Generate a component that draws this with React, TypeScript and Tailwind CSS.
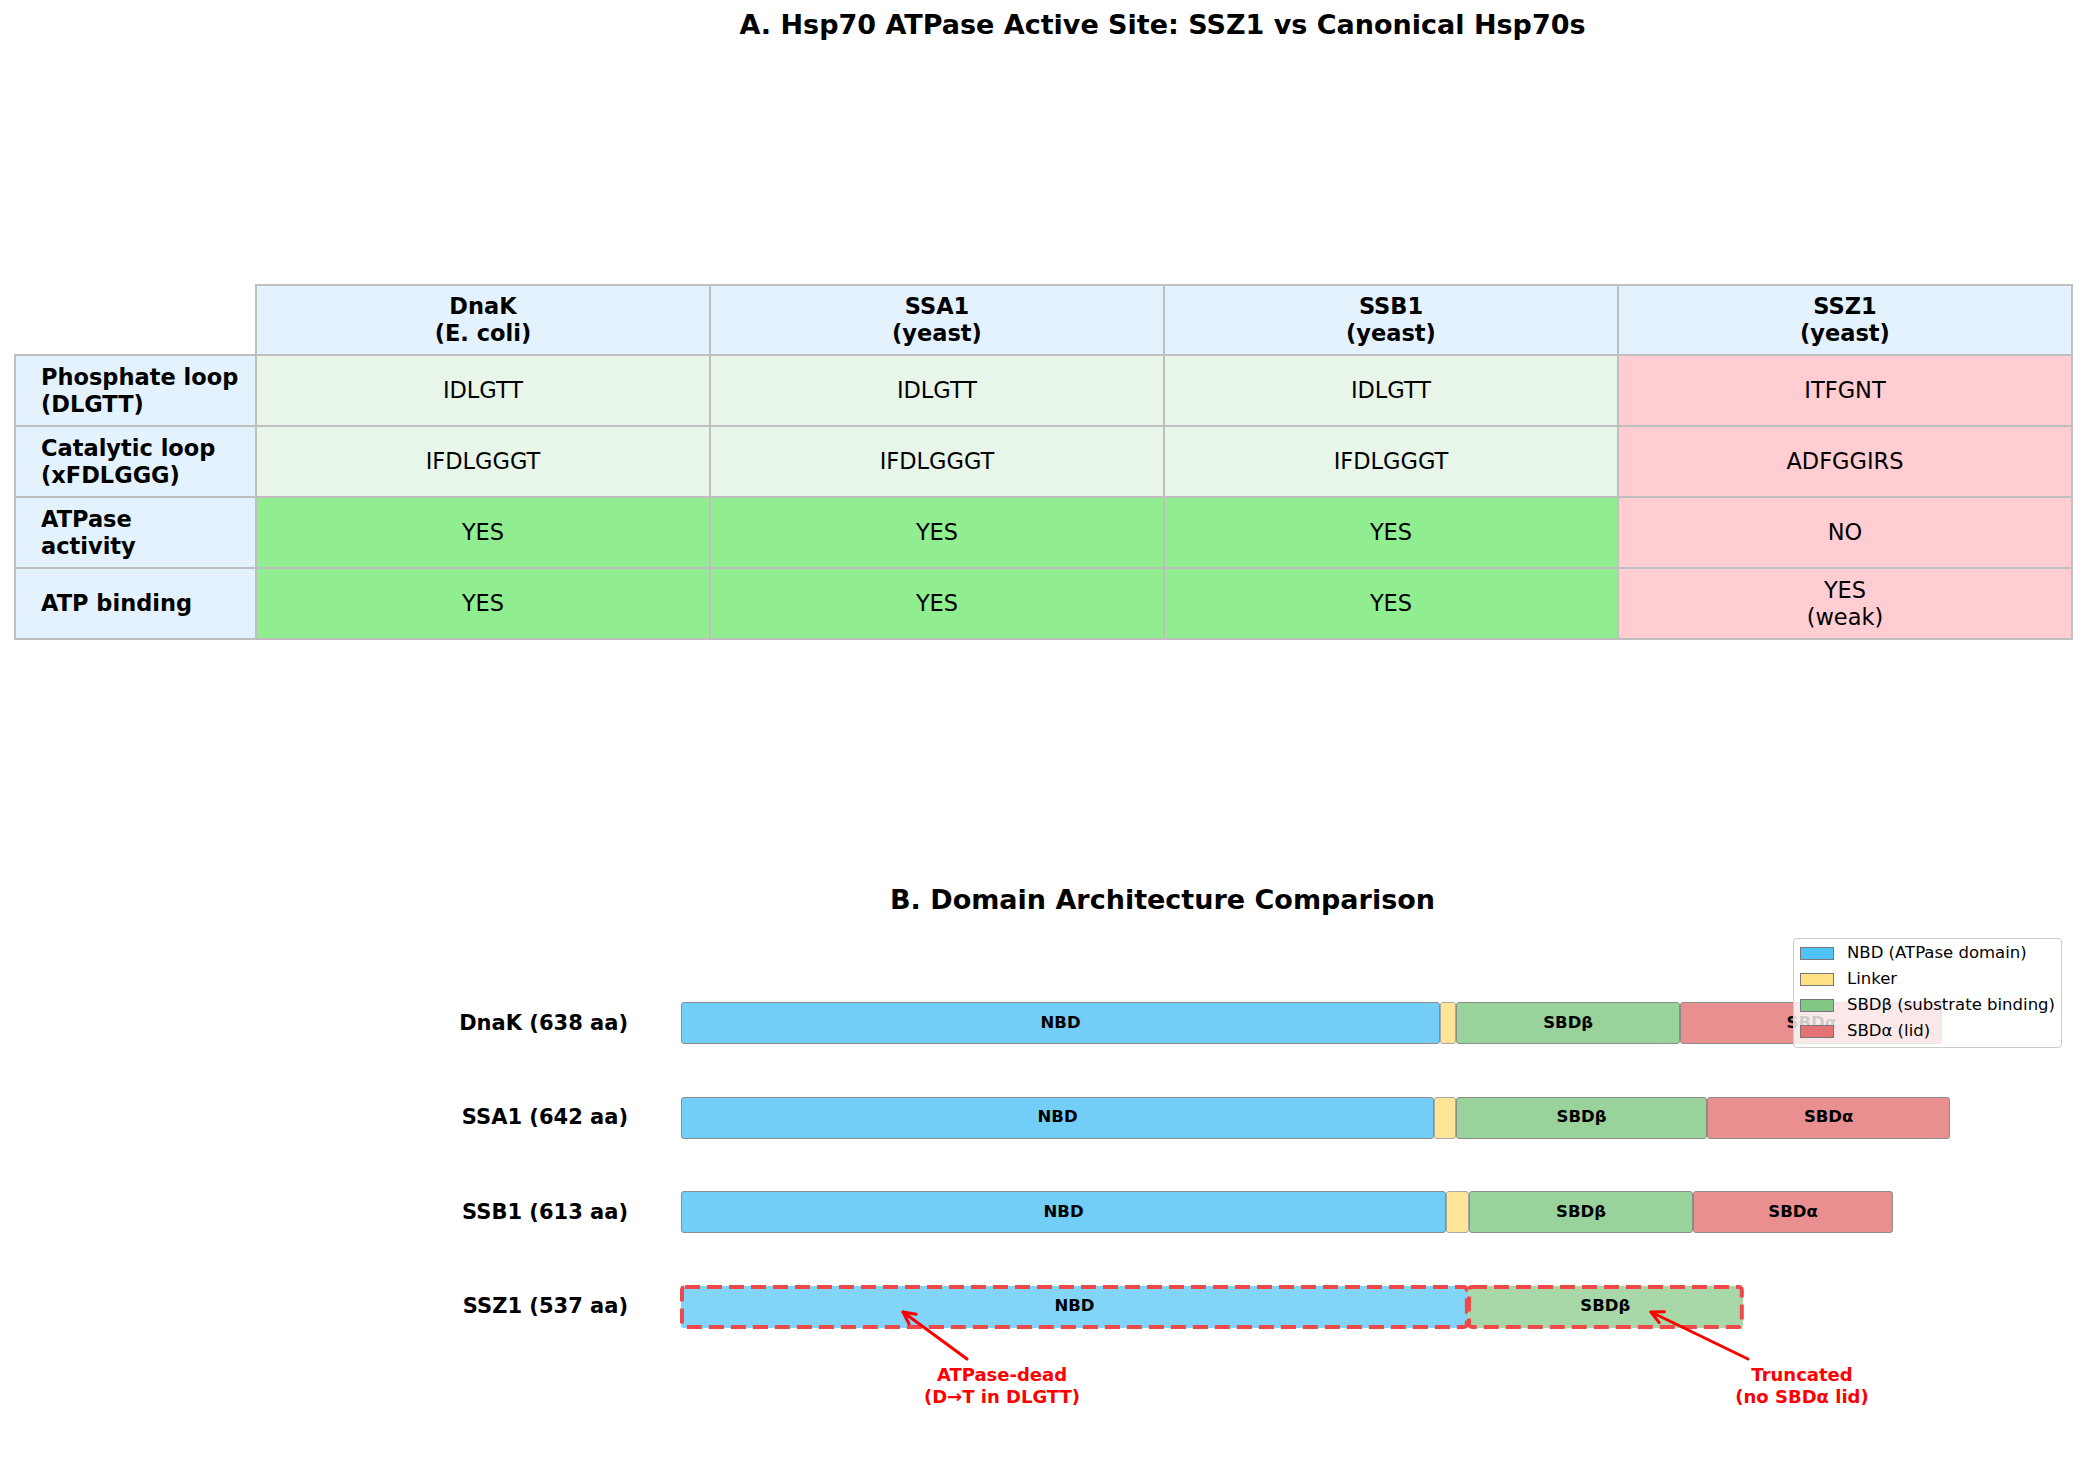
import React from 'react';

type Kind = 'nbd' | 'linker' | 'beta' | 'alpha';

interface Protein {
  name: string;
  bounds: number[];
  kinds: Kind[];
  dead?: boolean;
}

const PX_PER_AA = 1.977;

const proteins: Protein[] = [
  { name: 'DnaK (638 aa)', bounds: [0, 384, 392, 505.5, 638], kinds: ['nbd', 'linker', 'beta', 'alpha'] },
  { name: 'SSA1 (642 aa)', bounds: [0, 381, 392, 519, 642], kinds: ['nbd', 'linker', 'beta', 'alpha'] },
  { name: 'SSB1 (613 aa)', bounds: [0, 387, 398.5, 512, 613], kinds: ['nbd', 'linker', 'beta', 'alpha'] },
  { name: 'SSZ1 (537 aa)', bounds: [0, 398, 537], kinds: ['nbd', 'beta'], dead: true },
];

const segClass: Record<Kind, string> = {
  nbd: 'bg-[#72cef7] border-[1.5px] border-[#8c8c8c]',
  linker: 'bg-[#ffe597] border-[1.5px] border-[#a8a8a8]',
  beta: 'bg-[#9ad29c] border-[1.5px] border-[#8c8c8c]',
  alpha: 'bg-[#ea8f8f] border-[1.5px] border-[#8c8c8c]',
};

const deadClass: Record<Kind, string> = {
  nbd: 'bg-[#82d4f8]',
  linker: 'bg-[#ffe9a8]',
  beta: 'bg-[#a8d8a8]',
  alpha: 'bg-[#eea0a0]',
};

const segLabel: Record<Kind, string> = {
  nbd: 'NBD',
  linker: '',
  beta: 'SBDβ',
  alpha: 'SBDα',
};

const columns = [
  ['DnaK', '(E. coli)'],
  ['SSA1', '(yeast)'],
  ['SSB1', '(yeast)'],
  ['SSZ1', '(yeast)'],
];

const rows: { label: string[]; cells: string[][]; fill: string }[] = [
  { label: ['Phosphate loop', '(DLGTT)'], cells: [['IDLGTT'], ['IDLGTT'], ['IDLGTT'], ['ITFGNT']], fill: 'bg-[#e8f5e9]' },
  { label: ['Catalytic loop', '(xFDLGGG)'], cells: [['IFDLGGGT'], ['IFDLGGGT'], ['IFDLGGGT'], ['ADFGGIRS']], fill: 'bg-[#e8f5e9]' },
  { label: ['ATPase', 'activity'], cells: [['YES'], ['YES'], ['YES'], ['NO']], fill: 'bg-[#90ee90]' },
  { label: ['ATP binding'], cells: [['YES'], ['YES'], ['YES'], ['YES', '(weak)']], fill: 'bg-[#90ee90]' },
];

const legend: { kind: string; text: string }[] = [
  { kind: 'bg-[#4fc3f7]', text: 'NBD (ATPase domain)' },
  { kind: 'bg-[#ffe082]', text: 'Linker' },
  { kind: 'bg-[#81c784]', text: 'SBDβ (substrate binding)' },
  { kind: 'bg-[#e57373]', text: 'SBDα (lid)' },
];

function Bar({ p }: { p: Protein }) {
  return (
    <div className="ml-[53px] flex h-[42px]">
      {p.kinds.map((k, i) => {
        const w = (p.bounds[i + 1] - p.bounds[i]) * PX_PER_AA;
        return (
          <div
            key={i}
            className={`relative box-border flex items-center justify-center rounded-[3px] text-[16.5px] font-bold leading-none ${
              p.dead ? deadClass[k] : segClass[k]
            }`}
            style={{ width: w }}
          >
            {segLabel[k]}
            {p.dead && (
              <svg className="pointer-events-none absolute left-0 top-0 overflow-visible" width={w} height={42}>
                <rect
                  x="1"
                  y="1"
                  width={w - 2}
                  height="40"
                  rx="3"
                  fill="none"
                  stroke="#f04848"
                  strokeWidth="4"
                  strokeDasharray="15 7"
                />
              </svg>
            )}
          </div>
        );
      })}
    </div>
  );
}

export default function App() {
  return (
    <div className="relative h-[1484px] w-[2085px] overflow-hidden bg-white text-black font-['DejaVu_Sans',sans-serif]">
      {/* A. table */}
      <h1 className="ml-[255px] w-[1815px] pt-[9px] text-center text-[27px] font-bold leading-[32px]">
        A. Hsp70 ATPase Active Site: SSZ1 vs Canonical Hsp70s
      </h1>

      <table className="ml-[14px] mt-[243px] w-[2057px] table-fixed border-collapse text-[22.5px] leading-[27px]">
        <colgroup>
          <col className="w-[241px]" />
          <col className="w-[454px]" />
          <col className="w-[454px]" />
          <col className="w-[454px]" />
          <col className="w-[454px]" />
        </colgroup>
        <thead>
          <tr className="h-[70px]">
            <th className="border-0 p-0" />
            {columns.map((c) => (
              <th key={c[0]} className="border-2 border-[#bfbfbf] bg-[#e3f2fd] p-0 text-center font-bold">
                {c[0]}
                <br />
                {c[1]}
              </th>
            ))}
          </tr>
        </thead>
        <tbody>
          {rows.map((r) => (
            <tr key={r.label[0]} className="h-[71px]">
              <td className="border-2 border-[#bfbfbf] bg-[#e3f2fd] py-0 pl-[25px] pr-0 text-left font-bold">
                {r.label.map((l, i) => (
                  <div key={i}>{l}</div>
                ))}
              </td>
              {r.cells.map((c, i) => (
                <td
                  key={i}
                  className={`border-2 border-[#bfbfbf] p-0 text-center ${i === 3 ? 'bg-[#ffcdd2]' : r.fill}`}
                >
                  {c.map((l, j) => (
                    <div key={j}>{l}</div>
                  ))}
                </td>
              ))}
            </tr>
          ))}
        </tbody>
      </table>

      {/* B. domain bars */}
      <h2 className="ml-[255px] mt-[244px] w-[1815px] text-center text-[27px] font-bold leading-[32px]">
        B. Domain Architecture Comparison
      </h2>

      <div className="mt-[86px] flex flex-col gap-[52.5px]">
        {proteins.map((p) => (
          <div key={p.name} className="flex items-center">
            <div className="w-[628px] text-right text-[21px] font-bold leading-none">{p.name}</div>
            <Bar p={p} />
          </div>
        ))}
      </div>

      <div className="mt-[36px] flex text-center text-[18px] font-bold leading-[22px] text-[#ff0000]">
        <div className="ml-[902px] w-[200px]">
          ATPase-dead
          <br />
          (D→T in DLGTT)
        </div>
        <div className="ml-[600px] w-[200px]">
          Truncated
          <br />
          (no SBDα lid)
        </div>
      </div>

      {/* legend */}
      <div className="absolute left-[1793px] top-[938px] box-border h-[110px] w-[269px] rounded-[4px] border-[1.5px] border-[#cccccc] bg-white/80 pt-[1px]">
        {legend.map((l) => (
          <div key={l.text} className="flex h-[26px] items-center">
            <div className={`ml-[6px] box-border h-[13px] w-[34px] border-[1.5px] border-[#777777] ${l.kind}`} />
            <div className="ml-[13px] text-[16.5px] leading-none">{l.text}</div>
          </div>
        ))}
      </div>

      {/* annotation arrows */}
      <svg className="pointer-events-none absolute left-0 top-0" width="2085" height="1484">
        <g stroke="#ff0000" strokeWidth="3" fill="none" strokeLinecap="round" strokeLinejoin="round">
          <line x1="967" y1="1359" x2="903" y2="1312" />
          <polyline points="916.2,1314.3 903,1312 909.1,1324" />
          <line x1="1748" y1="1359" x2="1651" y2="1312" />
          <polyline points="1664.4,1311.8 1651,1312 1659.2,1322.6" />
        </g>
      </svg>
    </div>
  );
}
